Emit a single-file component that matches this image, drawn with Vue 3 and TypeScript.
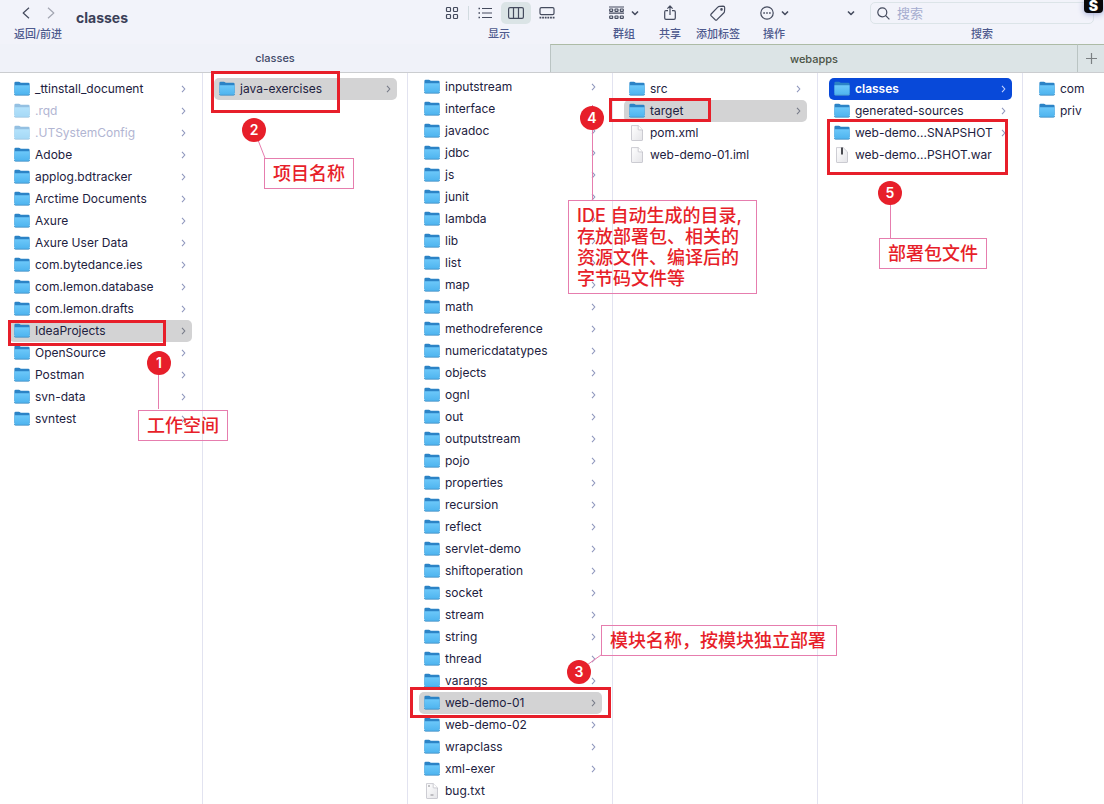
<script setup lang="ts">
type Kind = 'folder' | 'file' | 'text' | 'archive'

interface Entry {
  name: string
  kind: Kind
  faded?: boolean
  state?: 'trail' | 'active'
}

interface Column {
  id: string
  entries: Entry[]
}

const folders = (names: string[], trail = ''): Entry[] =>
  names.map((name) => ({ name, kind: 'folder', state: name === trail ? 'trail' : undefined }))

const columns: Column[] = [
  {
    id: 'home',
    entries: [
      { name: '_ttinstall_document', kind: 'folder' },
      { name: '.rqd', kind: 'folder', faded: true },
      { name: '.UTSystemConfig', kind: 'folder', faded: true },
      ...folders(
        ['Adobe', 'applog.bdtracker', 'Arctime Documents', 'Axure', 'Axure User Data', 'com.bytedance.ies',
          'com.lemon.database', 'com.lemon.drafts', 'IdeaProjects', 'OpenSource', 'Postman', 'svn-data', 'svntest'],
        'IdeaProjects',
      ),
    ],
  },
  { id: 'workspace', entries: folders(['java-exercises'], 'java-exercises') },
  {
    id: 'project',
    entries: [
      ...folders(
        ['inputstream', 'interface', 'javadoc', 'jdbc', 'js', 'junit', 'lambda', 'lib', 'list', 'map', 'math',
          'methodreference', 'numericdatatypes', 'objects', 'ognl', 'out', 'outputstream', 'pojo', 'properties',
          'recursion', 'reflect', 'servlet-demo', 'shiftoperation', 'socket', 'stream', 'string', 'thread',
          'varargs', 'web-demo-01', 'web-demo-02', 'wrapclass', 'xml-exer'],
        'web-demo-01',
      ),
      { name: 'bug.txt', kind: 'text' },
    ],
  },
  {
    id: 'module',
    entries: [
      ...folders(['src', 'target'], 'target'),
      { name: 'pom.xml', kind: 'file' },
      { name: 'web-demo-01.iml', kind: 'file' },
    ],
  },
  {
    id: 'target',
    entries: [
      { name: 'classes', kind: 'folder', state: 'active' },
      { name: 'generated-sources', kind: 'folder' },
      { name: 'web-demo...SNAPSHOT', kind: 'folder' },
      { name: 'web-demo...PSHOT.war', kind: 'archive' },
    ],
  },
  { id: 'packages', entries: folders(['com', 'priv']) },
]

const notes = [
  { id: 1, lines: ['工作空间'] },
  { id: 2, lines: ['项目名称'] },
  { id: 3, lines: ['模块名称，按模块独立部署'] },
  { id: 4, lines: ['IDE 自动生成的目录,', '存放部署包、相关的', '资源文件、编译后的', '字节码文件等'] },
  { id: 5, lines: ['部署包文件'] },
]
</script>

<template>
  <main class="finder">
    <svg class="defs" aria-hidden="true">
      <defs>
        <linearGradient id="folder-front" x1="0" y1="0" x2="0" y2="1">
          <stop offset="0" stop-color="#6cc8fa" />
          <stop offset="1" stop-color="#4db3ee" />
        </linearGradient>
        <linearGradient id="paper" x1="0" y1="0" x2="1" y2="1">
          <stop offset="0" stop-color="#ffffff" />
          <stop offset="1" stop-color="#e4e4e8" />
        </linearGradient>
      </defs>
    </svg>

    <header class="toolbar">
      <div class="tool nav">
        <div class="icons">
          <button type="button" aria-label="返回"><svg width="10" height="12" viewBox="0 0 10 12"><path d="M8 .8 2.2 6 8 11.2" /></svg></button>
          <button type="button" class="dim" aria-label="前进"><svg width="10" height="12" viewBox="0 0 10 12"><path d="M2 .8 7.8 6 2 11.2" /></svg></button>
        </div>
        <span class="caption">返回/前进</span>
      </div>
      <h1>classes</h1>
      <div class="tool views">
        <div class="icons">
          <button type="button" aria-label="图标">
            <svg width="14" height="14" viewBox="0 0 14 14"><rect x="1.5" y="1.5" width="4" height="4" rx=".8" /><rect x="8.5" y="1.5" width="4" height="4" rx=".8" /><rect x="1.5" y="8.5" width="4" height="4" rx=".8" /><rect x="8.5" y="8.5" width="4" height="4" rx=".8" /></svg>
          </button>
          <i class="rule"></i>
          <button type="button" aria-label="列表">
            <svg width="14" height="12" viewBox="0 0 14 12"><path d="M4 1.5h10M4 6h10M4 10.5h10" /><path d="M.5 1.5H2M.5 6H2M.5 10.5H2" stroke-width="1.6" /></svg>
          </button>
          <button type="button" class="chosen" aria-label="分栏">
            <svg width="16" height="12" viewBox="0 0 16 12"><rect x=".6" y=".6" width="14.8" height="10.8" rx="1.4" /><path d="M5.5.6v10.8M10.5.6v10.8" /></svg>
          </button>
          <button type="button" aria-label="画廊">
            <svg width="16" height="12" viewBox="0 0 16 12"><rect x="1" y=".6" width="14" height="7" rx="1.4" /><path d="M.5 10.700h15" stroke-width="1.800" stroke-dasharray="1.800 .84" /></svg>
          </button>
        </div>
        <span class="caption">显示</span>
      </div>
      <div class="tool group">
        <div class="icons">
          <button type="button" aria-label="群组">
            <svg width="15" height="14" viewBox="0 0 15 14"><path d="M0 1h15M0 7.2h15" /><rect x=".7" y="3" width="3" height="2.4" rx=".6" /><rect x="6" y="3" width="3" height="2.4" rx=".6" /><rect x="11.3" y="3" width="3" height="2.4" rx=".6" /><rect x=".7" y="10" width="3" height="2.4" rx=".6" /><rect x="6" y="10" width="3" height="2.4" rx=".6" /><rect x="11.3" y="10" width="3" height="2.4" rx=".6" /></svg>
            <svg class="down" width="8" height="6" viewBox="0 0 8 6"><path d="m1 1.5 3 3 3-3" /></svg>
          </button>
        </div>
        <span class="caption">群组</span>
      </div>
      <div class="tool share">
        <div class="icons">
          <button type="button" aria-label="共享">
            <svg width="12" height="16" viewBox="0 0 12 16"><path d="M4 5.6H2Q.7 5.6.7 7v6q0 1.4 1.3 1.4h8q1.3 0 1.3-1.4V7q0-1.4-1.3-1.4H8M6 10V1.2M3.4 3.6 6 1l2.6 2.6" /></svg>
          </button>
        </div>
        <span class="caption">共享</span>
      </div>
      <div class="tool tags">
        <div class="icons">
          <button type="button" aria-label="添加标签">
            <svg width="16" height="16" viewBox="0 0 16 16"><path d="m1.2 9 6.6-6.8Q8.5 1.4 9.6 1.3l3.5-.2q1.6 0 1.6 1.6l-.2 3.5q0 1-.8 1.8L7 14.7q-.9.8-1.8 0L1.2 10.900q-.8-1 0-1.900z" /><circle cx="11.500" cy="4.400" r=".7" /></svg>
          </button>
        </div>
        <span class="caption">添加标签</span>
      </div>
      <div class="tool action">
        <div class="icons">
          <button type="button" aria-label="操作">
            <svg width="14" height="14" viewBox="0 0 14 14"><circle cx="7" cy="7" r="6.200" /><path d="M3.300 7h1.600M6.200 7h1.600M9.100 7h1.600" stroke-width="1.600" /></svg>
            <svg class="down" width="8" height="6" viewBox="0 0 8 6"><path d="m1 1.5 3 3 3-3" /></svg>
          </button>
        </div>
        <span class="caption">操作</span>
      </div>
      <div class="tool more">
        <div class="icons">
          <button type="button" aria-label="更多">
            <svg class="down" width="8" height="6" viewBox="0 0 8 6"><path d="m1 1.5 3 3 3-3" /></svg>
          </button>
        </div>
      </div>
      <div class="tool search">
        <div class="field">
          <svg width="13" height="13" viewBox="0 0 13 13"><circle cx="5.300" cy="5.300" r="4.500" /><path d="m8.700 8.700 3.700 3.700" /></svg>
          <input id="search" type="text" placeholder="搜索" />
        </div>
        <label class="caption" for="search">搜索</label>
      </div>
      <span class="ime">S</span>
    </header>

    <nav class="tabs">
      <button type="button" class="tab">classes</button>
      <button type="button" class="tab back">webapps</button>
      <button type="button" class="add" aria-label="新标签页"><svg width="11" height="11" viewBox="0 0 11 11"><path d="M5.500 0v11M0 5.500h11" /></svg></button>
    </nav>

    <div class="browser">
      <ul v-for="column in columns" :key="column.id" class="column" :class="column.id">
        <li v-for="entry in column.entries" :key="entry.name">
          <button type="button" class="row" :class="[entry.state, { faded: entry.faded }]">
            <svg v-if="entry.kind === 'folder'" class="icon" width="16" height="16" viewBox="0 0 16 16">
              <path d="M.4 2q0-1.300 1.300-1.300h3.200q.7 0 1.200.5l.6.500h7.600q1.300 0 1.300 1.300v9H.4z" fill="#2b83c6" />
              <path d="M.4 4.200h15.200v9q0 1-1 1H1.400q-1 0-1-1z" fill="url(#folder-front)" />
              <path d="M.4 13q0 1.200 1 1.200h13.200q1 0 1-1.200" fill="none" stroke="#4790c4" stroke-width=".8" />
            </svg>
            <svg v-else class="icon" width="16" height="16" viewBox="0 0 16 16">
              <path d="M2.500.6h6.700l4.300 4.300v10q0 .600-.6.600H3.100q-.6 0-.6-.600z" fill="url(#paper)" stroke="#b9b9c2" stroke-width=".7" />
              <path v-if="entry.kind !== 'archive'" d="M9.200.6v3.700q0 .6.600.6h3.700" fill="#fff" stroke="#b9b9c2" stroke-width=".7" />
              <path v-if="entry.kind === 'archive'" d="M8 .6v6.800" stroke="#4a4b50" stroke-width="2" />
              <path v-if="entry.kind === 'text'" d="M4 3h2M6.500 12h3" stroke="#8c8c92" />
            </svg>
            <span class="name">{{ entry.name }}</span>
            <svg v-if="entry.kind === 'folder' && column.id !== 'packages'" class="chevron" width="5" height="8" viewBox="0 0 5 8"><path d="m1 .8 2.800 3.200L1 7.200" /></svg>
          </button>
        </li>
      </ul>
    </div>

    <div class="overlay">
      <svg class="leaders" aria-hidden="true">
        <path d="M158.500 374v35M258 140l7 18M587 665l14-10M592.500 105v95M890.500 204v34" />
      </svg>
      <template v-for="note in notes" :key="note.id">
        <span class="frame" :class="`frame-${note.id}`"></span>
        <span class="badge" :class="`badge-${note.id}`">{{ note.id }}</span>
        <p class="note" :class="`note-${note.id}`"><span v-for="line in note.lines" :key="line">{{ line }}</span></p>
      </template>
    </div>
  </main>
</template>

<style>
body {
  margin: 0;
  overflow: hidden;
}
</style>

<style scoped>
.finder {
  position: relative;
  display: flex;
  flex-direction: column;
  height: 100vh;
  overflow: hidden;
  background: #fff;
  color: #1d2140;
  font-family: Inter, "Noto Sans CJK SC", sans-serif;
  font-size: 12px;
}
.defs {
  position: absolute;
  width: 0;
  height: 0;
}
button {
  margin: 0;
  padding: 0;
  border: 0;
  background: none;
  color: inherit;
  font: inherit;
}
svg {
  flex: none;
}

.toolbar {
  position: relative;
  display: flex;
  flex: none;
  height: 44px;
  background: #f2f3fa;
}
.toolbar svg,
.add svg {
  display: block;
  fill: none;
  stroke: #454b5e;
  stroke-width: 1.2;
  stroke-linecap: butt;
  stroke-linejoin: round;
}
.tool {
  display: flex;
  flex: none;
  flex-direction: column;
  align-items: center;
}
.icons {
  display: flex;
  align-items: center;
  height: 26px;
}
.icons button {
  display: flex;
  align-items: center;
}
.toolbar .down {
  stroke-width: 1.6;
}
.caption {
  color: #4e5a8e;
  font-size: 11px;
  font-weight: 500;
  line-height: 16px;
  white-space: nowrap;
}
.nav {
  width: 54px;
  margin-left: 11px;
}
.nav .icons {
  gap: 15px;
}
.nav .dim svg {
  stroke: #a3a6b2;
}
h1 {
  flex: 1;
  margin: 0 0 0 11px;
  color: #3b4058;
  font-size: 14px;
  font-weight: 700;
  line-height: 36px;
}
.views {
  width: 124px;
}
.views .icons button {
  justify-content: center;
  width: 30px;
  height: 22px;
  border-radius: 5px;
}
.views .icons .chosen {
  background: #dbe4e6;
}
.rule {
  width: 1px;
  height: 14px;
  background: #d2dbe0;
}
.views .icons {
  gap: 1px;
}
.group {
  width: 42px;
  margin-left: 42px;
}
.group button,
.action button {
  gap: 7px;
}
.share {
  width: 42px;
  margin-left: 4px;
}
.tags {
  width: 54px;
}
.action {
  width: 42px;
  margin-left: 8px;
}
.more {
  width: 16px;
  margin-left: 48px;
}
.search {
  width: 224px;
  margin: 0 10px 0 11px;
}
.field {
  box-sizing: border-box;
  display: flex;
  align-items: center;
  gap: 7px;
  width: 100%;
  height: 22px;
  margin: 2px 0;
  padding: 0 6px;
  border: 1px solid #dce4e8;
  border-radius: 5px;
}
.field input {
  flex: 1;
  min-width: 0;
  padding: 0;
  border: 0;
  outline: 0;
  background: none;
  color: #1d2140;
  font: inherit;
  font-size: 13px;
  line-height: 20px;
}
.field input::placeholder {
  color: #a5adcf;
  opacity: 1;
}
.ime {
  position: absolute;
  top: 0;
  right: 1px;
  width: 19px;
  height: 13px;
  border-radius: 0 0 4px 4px;
  background: #08080b;
  box-shadow: 0 1px 6px #9ca5d4;
  color: #fff;
  font-size: 14px;
  font-weight: 900;
  line-height: 11px;
  text-align: center;
}

.tabs {
  display: flex;
  flex: none;
  box-sizing: border-box;
  height: 29px;
  border-bottom: 1px solid #cbcdd0;
  background: #f0f2f9;
}
.tab {
  flex: 1;
  color: #414968;
  font-size: 11px;
  font-weight: 500;
}
.tab.back,
.add {
  border-top: 1px solid #adbba6;
  border-left: 1px solid #bac4c3;
  background: #dce4e6;
}
.tab.back {
  flex: 0 0 527px;
  color: #4a5245;
}
.add {
  display: flex;
  align-items: center;
  justify-content: center;
  width: 27px;
}
.add svg {
  stroke: #7b8083;
}

.browser {
  display: grid;
  flex: 1;
  grid-template-columns: 203px repeat(4, 205px) 1fr;
  min-height: 0;
}
.column {
  min-width: 0;
  margin: 0;
  padding: 5px 10px 0 11px;
  border-right: 1px solid #e2e3f0;
  list-style: none;
}
.column.home {
  padding-left: 9px;
}
.column.project {
  padding-top: 3px;
}
.column.packages {
  border-right: 0;
}
.row {
  display: flex;
  align-items: center;
  box-sizing: border-box;
  width: 100%;
  height: 22px;
  padding: 0 6px 0 5px;
  border-radius: 5px;
  text-align: left;
}
.row.trail {
  background: #d3d3d4;
}
.row.active {
  background: #0849d9;
  color: #fff;
  font-weight: 600;
}
.name {
  flex: 1;
  margin-left: 5px;
  line-height: 22px;
  white-space: nowrap;
}
.faded .icon {
  opacity: .5;
}
.faded .name {
  color: #b1b5d2;
}
.chevron {
  fill: none;
  stroke: #8f97bd;
  stroke-width: 1.1;
}
.trail .chevron {
  stroke: #777b88;
}
.active .chevron {
  stroke: #c5d4ff;
}

.overlay {
  position: absolute;
  inset: 0;
  pointer-events: none;
}
.leaders {
  width: 100%;
  height: 100%;
  fill: none;
  stroke: #e67dae;
}
.frame,
.badge,
.note {
  position: absolute;
  box-sizing: border-box;
}
.frame {
  border: 3px solid #e71f2a;
}
.badge {
  width: 24px;
  height: 24px;
  border-radius: 50%;
  background: #e71f2a;
  color: #fff;
  font-size: 14px;
  font-weight: 600;
  line-height: 24px;
  text-align: center;
}
.note {
  margin: 0;
  padding: 0 8px;
  border: 1px solid #e67dae;
  color: #e71f2a;
  font-size: 18px;
  font-weight: 500;
  line-height: 29px;
  white-space: nowrap;
}
.note span {
  display: block;
}
.frame-1 { left: 8px; top: 320px; width: 158px; height: 26px; }
.frame-2 { left: 211px; top: 71px; width: 129px; height: 42px; }
.frame-3 { left: 410px; top: 687px; width: 201px; height: 31px; }
.frame-4 { left: 609px; top: 98px; width: 102px; height: 24px; }
.frame-5 { left: 827px; top: 119px; width: 181px; height: 56px; }
.badge-1 { left: 147px; top: 351px; }
.badge-2 { left: 242px; top: 118px; }
.badge-3 { left: 567px; top: 660px; }
.badge-4 { left: 580px; top: 106px; }
.badge-5 { left: 878px; top: 181px; }
.note-1 { left: 138px; top: 410px; }
.note-2 { left: 264px; top: 158px; }
.note-3 { left: 601px; top: 625px; padding-right: 10px; }
.note-4 { left: 568px; top: 200px; padding: 4px 14px 4px 8px; line-height: 21px; }
.note-5 { left: 879px; top: 238px; }
</style>
